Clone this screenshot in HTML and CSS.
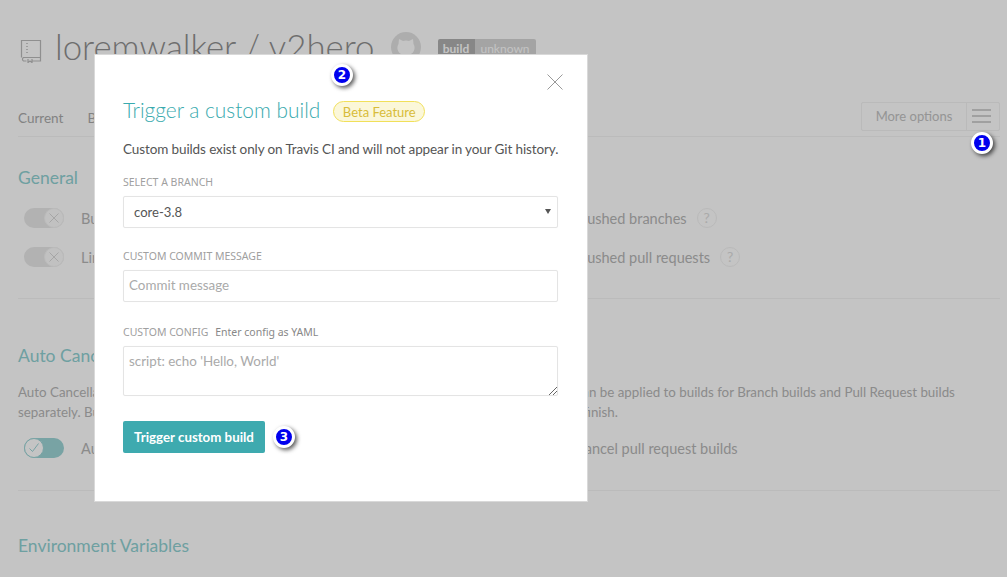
FILE: index.html
```html
<!DOCTYPE html>
<html lang="en">
<head>
<meta charset="utf-8">
<title>Trigger a custom build</title>
<link rel="stylesheet" href="styles.css">
</head>
<body>
<div class="page">
  <header class="repo">
    <svg class="repo-icon" width="22" height="24" viewBox="0 0 22 24" fill="none" stroke="#bbb" stroke-width="1.2"><path d="M1.500 18.500V1.500h19v17H3.500a2 2 0 0 0 0 3.500h3M12 22h8.500v-3.500M8 20v3.500l2-1.500 2 1.500V20"/><path d="M7 4v1M7 7v1M7 10v1M7 13v1" stroke-width="1.500"/></svg>
    <h1 class="repo-name">loremwalker / v2hero</h1>
    <svg class="octo" width="30" height="30" viewBox="0 0 30 30"><circle cx="15" cy="15" r="15" fill="#e2e2e2"/><path d="M8 7l4 2a11 11 0 0 1 6 0l4-2 .5 5c2 3 1.500 9-4 10.500v7h-7v-7c-5.500-1.500-6-7.500-4-10.500z" fill="#fff"/></svg>
    <div class="status"><span class="status-l">build</span><span class="status-r">unknown</span></div>
  </header>
  <nav class="tabs">
    <a class="tab">Current</a>
    <a class="tab">Branches</a>
    <div class="tabs-actions"><span class="more">More options</span><span class="burger"><i></i><i></i><i></i></span></div>
  </nav>
  <section class="sect sect-general">
    <h2 class="sect-title">General</h2>
    <div class="opts">
      <div class="opt"><span class="tog"><svg class="knob" width="20" height="20" viewBox="0 0 20 20" fill="none"><circle cx="10" cy="10" r="9.500" fill="#fbfbfb" stroke="#f2f2f2"/><path d="M5.500 5.500l9 9M14.500 5.500l-9 9" stroke="#d8d8d8"/></svg></span><span>Build only if .travis.yml is present</span></div>
      <div class="opt opt-r"><span>Build pushed branches</span><span class="q">?</span></div>
      <div class="opt"><span class="tog"><svg class="knob" width="20" height="20" viewBox="0 0 20 20" fill="none"><circle cx="10" cy="10" r="9.500" fill="#fbfbfb" stroke="#f2f2f2"/><path d="M5.500 5.500l9 9M14.500 5.500l-9 9" stroke="#d8d8d8"/></svg></span><span>Limit concurrent jobs</span></div>
      <div class="opt opt-r"><span>Build pushed pull requests</span><span class="q">?</span></div>
    </div>
  </section>
  <section class="sect sect-auto">
    <h2 class="sect-title">Auto Cancellation</h2>
    <p class="desc">Auto Cancellation allows you to only run builds for the latest commits in the queue. This setting can be applied to builds for Branch builds and Pull Request builds<br>separately. Builds will only be canceled if they are waiting to run, allowing for any running jobs to finish.</p>
    <div class="opts">
      <div class="opt"><span class="tog on"><svg class="knob" width="20" height="20" viewBox="0 0 20 20" fill="none"><circle cx="10" cy="10" r="9.500" fill="#fff" stroke="#9cd4d6"/><path d="M5.500 10.500l3 3 6-8" stroke="#9cd4d6"/></svg></span><span>Auto cancel branch builds</span></div>
      <div class="opt opt-r"><span>Auto cancel pull request builds</span></div>
    </div>
  </section>
  <section class="sect sect-env">
    <h2 class="sect-title">Environment Variables</h2>
  </section>
</div>

<div class="overlay"></div>

<div class="modal">
  <svg class="close" width="16" height="16" viewBox="0 0 16 16" stroke="#999" stroke-width="1"><path d="M.5.500l15 15M15.500.500l-15 15"/></svg>
  <div class="modal-head">
    <h2 class="modal-title">Trigger a custom build</h2>
    <span class="beta">Beta Feature</span>
  </div>
  <p class="modal-text">Custom builds exist only on Travis CI and will not appear in your Git history.</p>
  <label class="lbl">SELECT A BRANCH</label>
  <div class="field sel"><span>core-3.8</span><i class="caret"></i></div>
  <label class="lbl lbl-2">CUSTOM COMMIT MESSAGE</label>
  <div class="field inp">Commit message</div>
  <label class="lbl lbl-3">CUSTOM CONFIG <span class="hint">Enter config as YAML</span></label>
  <div class="field area">script: echo 'Hello, World'
    <svg class="grip" width="9" height="9" viewBox="0 0 9 9" stroke="#666" stroke-width="1"><path d="M1 9l8-8M5 9l4-4"/></svg>
  </div>
  <button class="btn" type="button">Trigger custom build</button>
</div>

<span class="mark mark-1">1</span>
<span class="mark mark-2">2</span>
<span class="mark mark-3">3</span>
</body>
</html>
```
FILE: styles.css
```css
* { box-sizing: border-box; }
html, body { margin: 0; height: 100%; }
body {
  width: 1007px;
  height: 577px;
  overflow: hidden;
  position: relative;
  background: #fff;
  font-family: Lato, "Noto Sans", sans-serif;
  color: #555;
}
.page { padding: 0 7px 0 18px; }
.repo { display: flex; align-items: center; height: 96px; padding: 0 0 0 2px; }
.repo-icon { margin-top: 5px; flex: none; }
.repo-name { margin: -3px 16px 0 13px; font-weight: 300; font-size: 34.800px; color: #8f8f8f; }
.status { display: flex; height: 20px; margin: 2px 0 0 17px; font-size: 12px; line-height: 20px; color: #fff; border-radius: 2px; overflow: hidden; }
.octo { flex: none; margin-top: -2px; }
.status-l { width: 37px; background: #b0b0b0; text-align: center; font-weight: 700; }
.status-r { width: 61px; background: #d6d6d6; text-align: center; }
.tabs { display: flex; align-items: center; height: 41px; border-bottom: 1px solid #f4f4f4; font-size: 13.500px; color: #aaa; }
.tab { margin-right: 24px; margin-top: 3px; }
.tabs-actions { margin-left: auto; display: flex; height: 29px; border: 1px solid #f2f2f2; border-radius: 2px; }
.more { width: 105px; text-align: center; font-size: 13px; line-height: 27px; border-right: 1px solid #f2f2f2; color: #c2c2c2; }
.burger { width: 32px; display: flex; flex-direction: column; gap: 4px; justify-content: center; align-items: center; padding-right: 3px; }
.burger i { width: 19px; height: 2px; background: #d0d0d0; }
.sect { border-bottom: 1px solid #f4f4f4; }
.sect-title { margin: 0; font-size: 17.500px; font-weight: 400; color: #8fd0d2; line-height: 24px; }
.sect-general { padding-top: 29px; height: 162px; }
.opts { display: grid; grid-template-columns: 525px 1fr; row-gap: 13px; margin-top: 15px; }
.opt { display: flex; align-items: center; gap: 17px; height: 26px; font-size: 14.500px; color: #b5b5b5; padding-left: 6px; }
.opt-r { gap: 10px; padding: 0; }
.q { width: 20px; height: 20px; border: 1px solid #f2f2f2; border-radius: 50%; text-align: center; line-height: 18px; color: #ddd; font-size: 14px; }
.tog { position: relative; display: block; flex: none; width: 40px; height: 20px; border-radius: 10px; background: #e8e8e8; }
.knob { position: absolute; right: 0; top: 0; }
.on { background: #9cd4d6; }
.on .knob { left: 0; right: auto; }
.sect-auto { padding-top: 45px; height: 192px; }
.desc { margin: 14px 0 0; font-size: 13.330px; line-height: 20px; color: #b5b5b5; white-space: nowrap; }
.sect-auto .opts { margin-top: 13px; }
.sect-env { border: 0; padding-top: 43px; }

.overlay { position: absolute; inset: 0; background: rgba(0, 0, 0, .23); }

.modal { position: absolute; left: 94px; top: 54px; width: 494px; height: 448px; padding: 41px 28px 0 28px; background: #fff; border: 1px solid #d9d9d9; }
.close { position: absolute; left: 452px; top: 19px; }
.modal-head { display: flex; align-items: center; height: 27px; }
.modal-title { margin: 0; font-size: 20.900px; font-weight: 300; color: #39aaae; }
.beta { margin: 4px 0 0 13px; height: 21px; width: 92px; border: 1px solid #f1e05a; border-radius: 11px; background: #fbf7d9; color: #d8bc3a; font-size: 13px; line-height: 20px; text-align: center; }
.modal-text { margin: 16px 0 0; font-size: 13.500px; letter-spacing: -.11px; line-height: 20px; color: #555; white-space: nowrap; }
.lbl { display: block; margin-top: 15px; font-family: "Noto Sans", sans-serif; font-size: 10.500px; line-height: 16px; color: #a0a0a0; }
.lbl-2 { margin-top: 20px; }
.lbl-3 { margin-top: 22px; }
.hint { margin-left: 4px; color: #888; }
.field { position: relative; width: 435px; margin-top: 6px; border: 1px solid #e4e4e4; border-radius: 2px; font-size: 13.400px; color: #aaa; box-shadow: 0 0 1px #eee; }
.sel { height: 32px; padding: 0 10px; line-height: 30px; color: #555; font-size: 13.100px; }
.caret { position: absolute; right: 6px; top: 12px; border: 3.500px solid transparent; border-top: 5px solid #555; border-bottom: 0; }
.inp { height: 32px; padding: 0 5px; line-height: 29px; }
.area { height: 50px; padding: 0 5px; line-height: 28px; }
.grip { position: absolute; right: 0; bottom: 0; }
.btn { display: block; width: 142px; height: 32px; margin-top: 25px; border: 0; border-radius: 2px; background: #3eaaaf; color: #fff; font: 700 13.300px Lato, sans-serif; padding: 0; }

.mark { position: absolute; width: 22px; height: 22px; border-radius: 50%; background: #00e; border: 3px solid #fff; box-shadow: 2px 2px 4px rgba(0, 0, 0, .65); color: #fff; font: 700 12px/16px "DejaVu Sans", sans-serif; text-align: center; }
.mark-1 { left: 971px; top: 132px; }
.mark-2 { left: 331px; top: 64px; }
.mark-3 { left: 273px; top: 426px; }
```
